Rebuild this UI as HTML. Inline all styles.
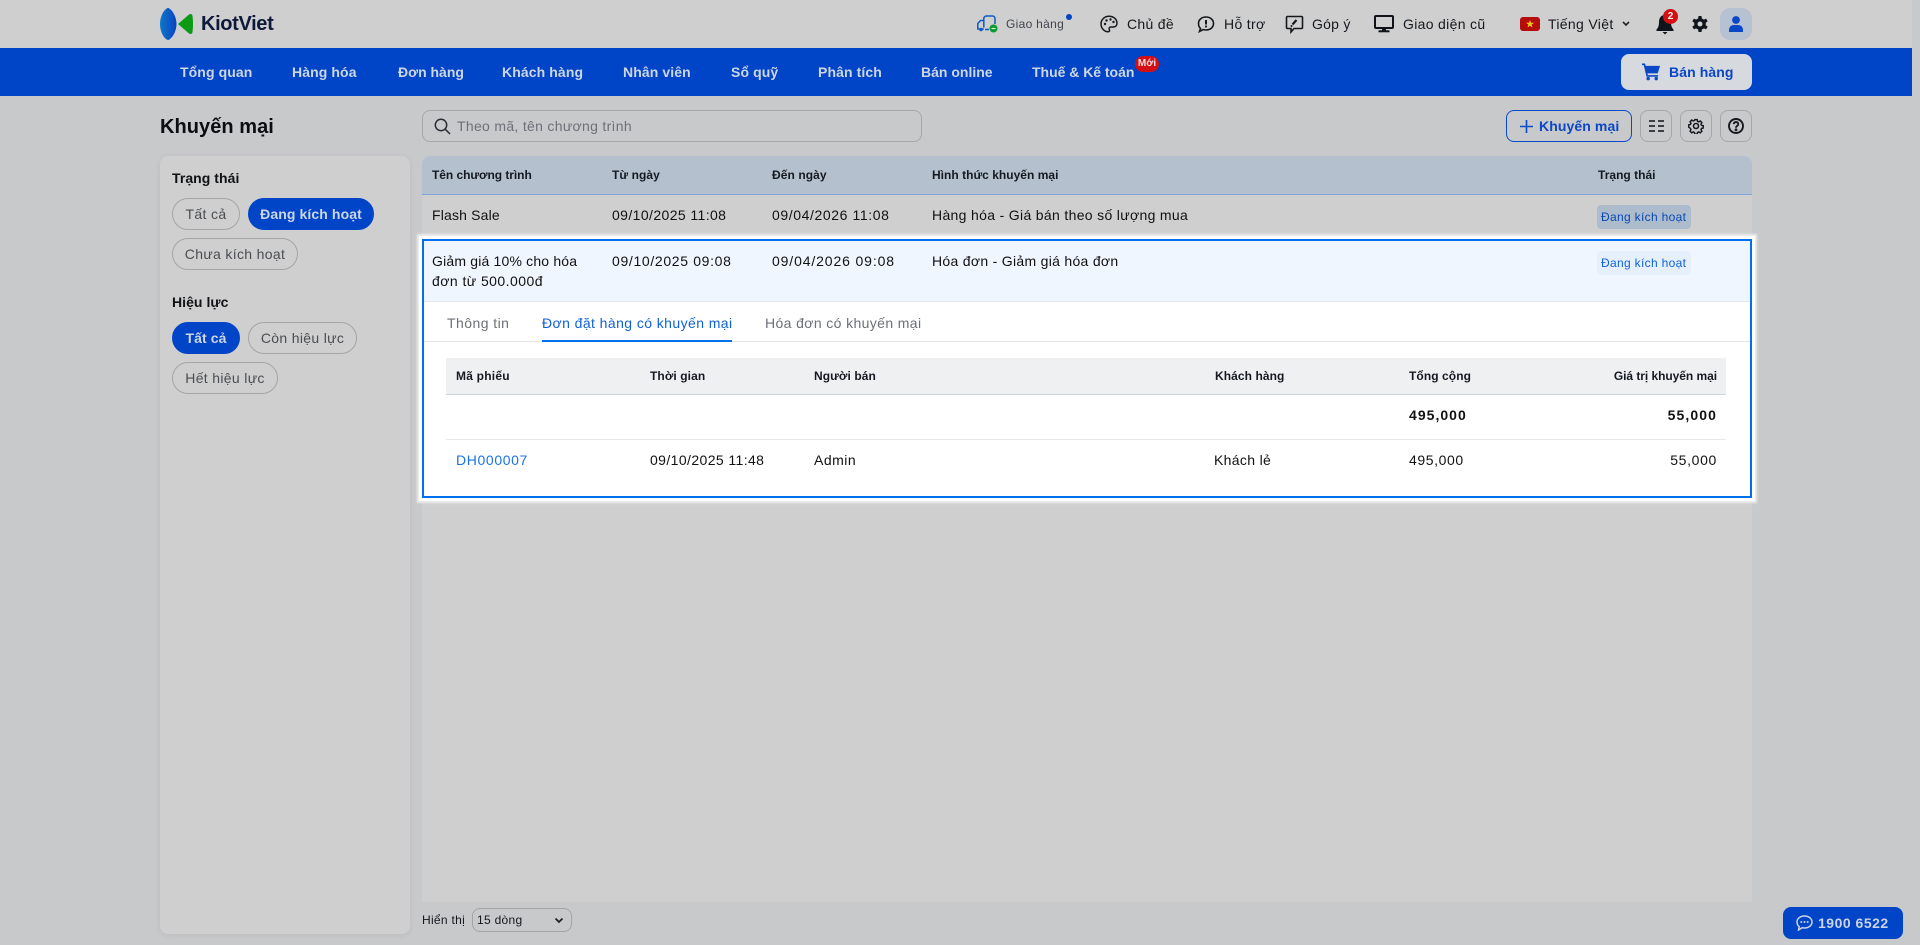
<!DOCTYPE html>
<html lang="vi"><head><meta charset="utf-8"><title>Khuyến mại</title>
<style>
*{box-sizing:border-box;margin:0;padding:0}
html,body{width:1920px;height:945px;overflow:hidden;background:#c8c9cb;font-family:"Liberation Sans",sans-serif;color:#111;font-size:14px}
.a{position:absolute}
.t{position:absolute;white-space:nowrap;line-height:20px;letter-spacing:.33px}
.b{font-weight:700}
.n{color:#ced6e4;font-weight:700;top:62px;letter-spacing:.1px}
.h{font-size:12px;font-weight:700;letter-spacing:.08px;color:#151a22}
.p{position:absolute;height:32px;border:1px solid #a4a5a7;border-radius:16px;line-height:30px;text-align:center;color:#4a4d52;letter-spacing:.33px;white-space:nowrap}
.p.on{background:#0044c8;border-color:#0044c8;color:#ced6e4;font-weight:700;letter-spacing:.1px}
.ib{position:absolute;top:110px;width:32px;height:32px;border:1px solid #a6a7a9;border-radius:8px}
svg{position:absolute;display:block}
</style></head><body>
<div class="a" style="left:0;top:0;width:1912px;height:48px;background:#cfcfcf"></div>
<div class="a" style="left:0;top:48px;width:1912px;height:48px;background:#0044c7"></div>

<!-- logo -->
<svg style="left:160px;top:8px" width="34" height="32" viewBox="0 0 34 32">
<defs><linearGradient id="g" x1="0" x2="1"><stop offset="0" stop-color="#0f78c4"/><stop offset="1" stop-color="#0a42c6"/></linearGradient></defs>
<path d="M7 .2C2.500 3 0 10 0 16s2.500 13 7 15.800C7.800 32 8.500 32 9 31.800 13.500 29 16.500 22 16.500 16S13.500 3 9 .2C8.500 0 7.800 0 7 .2z" fill="url(#g)"/>
<path d="M18 16L29 6.500Q32 5 32.500 8Q33.500 16 32.500 24Q32 27 29 25.500Z" fill="#0a9a16"/>
</svg>
<div class="t" style="left:201px;top:14px;font-size:20px;font-weight:700;color:#0e1a3a;letter-spacing:-.35px">KiotViet</div>

<!-- top right -->
<svg style="left:977px;top:15px" width="21" height="18" viewBox="0 0 21 18" fill="none">
<path d="M6.800 12.500V3.500a2.500 2.500 0 0 1 2.500-2.500h6.200a2.500 2.500 0 0 1 2.500 2.500V9" stroke="#0d5ac8" stroke-width="1.500"/><path d="M6.800 5.500H3.500L.8 8.500v5.500h6" stroke="#0d5ac8" stroke-width="1.500" fill="none"/><circle cx="4" cy="14.500" r="1.800" fill="#0d5ac8"/><path d="M8 14.500h4" stroke="#0d5ac8" stroke-width="1.500"/><circle cx="16.500" cy="13.500" r="4" fill="#0c9a2e"/><path d="M14.500 13.500h4" stroke="#d0f0d0" stroke-width="1.200"/></svg>
<div class="t" style="left:1006px;top:14px;font-size:12px;color:#40454c;letter-spacing:.3px">Giao hàng</div>
<div class="a" style="left:1066px;top:14px;width:6px;height:6px;border-radius:50%;background:#0044c8"></div>

<svg style="left:1100px;top:15px" width="18" height="18" viewBox="0 0 18 18" fill="none">
<path d="M9 1.200C4.500 1.200 1 4.700 1 9s3.500 7.800 7 7.800c1.600 0 1.800-1.200 1.300-2.200-.6-1.200 0-2.600 1.600-2.600h2.400c2 0 3.700-1.200 3.700-3.700C17 4 13.500 1.200 9 1.200z" stroke="#15181d" stroke-width="1.500"/><circle cx="5" cy="9" r="1.200" fill="#15181d"/><circle cx="6.500" cy="5.500" r="1.200" fill="#15181d"/><circle cx="10.500" cy="4.500" r="1.200" fill="#15181d"/><circle cx="13.500" cy="7" r="1.200" fill="#15181d"/></svg>
<div class="t" style="left:1127px;top:14px;letter-spacing:.3px;color:#15181d">Chủ đề</div>

<svg style="left:1197px;top:15px" width="18" height="18" viewBox="0 0 18 18" fill="none">
<path d="M9 2c4.400 0 7.500 2.800 7.500 6.500S13.400 15 9 15c-1 0-2-.2-2.800-.5L2.500 16.500l1-3C2.200 12.300 1.500 10.500 1.500 8.500 1.500 4.800 4.600 2 9 2z" stroke="#15181d" stroke-width="1.600"/><path d="M9 5v4.500" stroke="#15181d" stroke-width="2"/><circle cx="9" cy="11.500" r="1.100" fill="#15181d"/></svg>
<div class="t" style="left:1224px;top:14px;letter-spacing:.33px;color:#15181d">Hỗ trợ</div>

<svg style="left:1285px;top:15px" width="19" height="19" viewBox="0 0 19 19" fill="none">
<path d="M2.500 1.500h14a1 1 0 0 1 1 1v10a1 1 0 0 1-1 1H9l-3 3.500v-3.500H2.500a1 1 0 0 1-1-1v-10a1 1 0 0 1 1-1z" stroke="#15181d" stroke-width="1.600"/><path d="M7.500 9.500l4-4.500" stroke="#15181d" stroke-width="2.200"/><circle cx="6.500" cy="11" r="1" fill="#15181d"/></svg>
<div class="t" style="left:1312px;top:14px;letter-spacing:.25px;color:#15181d">Góp ý</div>

<svg style="left:1374px;top:15px" width="20" height="18" viewBox="0 0 20 18">
<rect x="1" y="1" width="18" height="12" rx="1" fill="none" stroke="#0f1217" stroke-width="2"/><rect x="8" y="13" width="4" height="3" fill="#0f1217"/><rect x="4.500" y="15.300" width="11" height="2" fill="#0f1217"/></svg>
<div class="t" style="left:1403px;top:14px;letter-spacing:.32px;color:#15181d">Giao diện cũ</div>

<svg style="left:1520px;top:17px" width="20" height="14" viewBox="0 0 20 14">
<rect width="20" height="14" rx="3" fill="#b50c0c"/><path d="M10 3l1 2.800h3l-2.400 1.800.9 2.900L10 8.700l-2.500 1.800.9-2.900L6 5.800h3z" fill="#f0c818"/></svg>
<div class="t" style="left:1548px;top:14px;letter-spacing:.33px;color:#15181d">Tiếng Việt</div>
<svg style="left:1622px;top:21px" width="8" height="6" viewBox="0 0 8 6" fill="none"><path d="M1 1l3 3 3-3" stroke="#222" stroke-width="1.600"/></svg>

<svg style="left:1656px;top:13px" width="18" height="22" viewBox="0 0 18 22">
<path d="M9 2C5 2 3 5 3 9c0 4-1 6-2.500 7.500V18h17v-1.500C16 15 15 13 15 9c0-4-2-7-6-7z" fill="#10151c"/><path d="M6.500 19h5L9 21.500z" fill="#10151c"/></svg>
<div class="a" style="left:1663px;top:9px;width:15px;height:15px;border-radius:50%;background:#d40f14;color:#f2f2f2;font-size:10px;font-weight:700;line-height:15px;text-align:center">2</div>

<svg style="left:1692px;top:16px" width="16" height="16" viewBox="0 0 16 16">
<g fill="#10151c"><circle cx="8" cy="8" r="5.800"/><rect x="6.300" y="0" width="3.400" height="16" rx=".8"/><rect x="6.300" y="0" width="3.400" height="16" rx=".8" transform="rotate(60 8 8)"/><rect x="6.300" y="0" width="3.400" height="16" rx=".8" transform="rotate(120 8 8)"/></g><circle cx="8" cy="8" r="2.500" fill="#cfcfcf"/></svg>

<div class="a" style="left:1720px;top:8px;width:32px;height:32px;border-radius:10px;background:#b6c2d1"></div>
<svg style="left:1729px;top:16px" width="14" height="16" viewBox="0 0 14 16" fill="#0a47c6"><circle cx="7" cy="4" r="3.900"/><path d="M0 16v-2c0-3 2-5 5-5h4c3 0 5 2 5 5v2z"/></svg>

<!-- nav -->
<div class="t n" style="left:180px">Tổng quan</div>
<div class="t n" style="left:292px">Hàng hóa</div>
<div class="t n" style="left:398px;letter-spacing:0">Đơn hàng</div>
<div class="t n" style="left:502px">Khách hàng</div>
<div class="t n" style="left:623px">Nhân viên</div>
<div class="t n" style="left:731px">Sổ quỹ</div>
<div class="t n" style="left:818px">Phân tích</div>
<div class="t n" style="left:921px;letter-spacing:0">Bán online</div>
<div class="t n" style="left:1032px;letter-spacing:-.02px">Thuế &amp; Kế toán</div>
<div class="a" style="left:1135px;top:56px;width:24px;height:16px;border-radius:8px;background:#d40f14;color:#f0e0e0;font-size:10px;font-weight:700;line-height:15px;text-align:center">Mới</div>

<div class="a" style="left:1621px;top:54px;width:131px;height:36px;border-radius:8px;background:#d6d9de"></div>
<svg style="left:1642px;top:63px" width="18" height="18" viewBox="0 0 19 18" fill="#0a47c6"><path d="M0 0h3.200l.7 2.500H19l-2.400 8H5.800l.4 1.800H17v1.700H4.800L1.800 1.700H0z"/><circle cx="6.500" cy="16" r="1.800"/><circle cx="15" cy="16" r="1.800"/></svg>
<div class="t" style="left:1669px;top:62px;font-weight:700;color:#0a47c6;letter-spacing:.1px">Bán hàng</div>

<!-- title + search -->
<div class="t" style="left:160px;top:116px;font-size:20px;font-weight:700;line-height:22px;color:#0b0d10;letter-spacing:.05px">Khuyến mại</div>
<div class="a" style="left:422px;top:110px;width:500px;height:32px;border:1px solid #a6a7a9;border-radius:8px"></div>
<svg style="left:434px;top:118px" width="17" height="17" viewBox="0 0 17 17" fill="none" stroke="#2a2d33" stroke-width="1.500"><circle cx="7" cy="7" r="5.700"/><path d="M11.300 11.300L16 16"/></svg>
<div class="t" style="left:457px;top:116px;color:#6c7077;letter-spacing:.31px">Theo mã, tên chương trình</div>

<div class="a" style="left:1506px;top:110px;width:126px;height:32px;border:1.500px solid #0a4ac8;border-radius:8px"></div>
<svg style="left:1520px;top:120px" width="13" height="13" viewBox="0 0 13 13" stroke="#0a4ac8" stroke-width="1.600"><path d="M6.500 0v13M0 6.500h13"/></svg>
<div class="t" style="left:1539px;top:116px;font-weight:700;color:#0a47c6;letter-spacing:.1px">Khuyến mại</div>
<div class="ib" style="left:1640px"></div>
<svg style="left:1649px;top:120px" width="15" height="13" viewBox="0 0 15 13" fill="#3b3f46"><rect y="0" width="6" height="2"/><rect x="9" y="0" width="6" height="2"/><rect y="5" width="6" height="2"/><rect x="9" y="5" width="6" height="2"/><rect y="10" width="6" height="2"/><rect x="9" y="10" width="6" height="2"/></svg>
<div class="ib" style="left:1680px"></div>
<svg style="left:1688px;top:118px" width="16" height="16" viewBox="0 0 16 16" fill="none" stroke="#16191e" stroke-width="1.600"><path d="M6.700 1h2.600l.4 1.900 1.300.6 1.700-1 1.800 1.800-1 1.700.6 1.300 1.900.4v2.600l-1.900.4-.6 1.300 1 1.700-1.800 1.800-1.700-1-1.300.6-.4 1.900H6.700l-.4-1.900-1.300-.6-1.700 1-1.800-1.800 1-1.700-.6-1.300L0 9.300V6.700l1.900-.4.600-1.300-1-1.700 1.800-1.800 1.700 1 1.300-.6z" transform="translate(.7 .7) scale(.91)"/><circle cx="8" cy="8" r="2.500"/></svg>
<div class="ib" style="left:1720px"></div>
<svg style="left:1728px;top:118px" width="16" height="16" viewBox="0 0 16 16" fill="none" stroke="#16191e" stroke-width="1.900"><circle cx="8" cy="8" r="7"/><path d="M5.700 6.200C5.800 4.800 6.800 4 8 4c1.300 0 2.300.9 2.300 2.100 0 1.800-2.300 1.800-2.300 3.600"/><circle cx="8" cy="11.800" r=".5" fill="#16191e"/></svg>

<!-- sidebar -->
<div class="a" style="left:160px;top:156px;width:250px;height:778px;border-radius:8px;background:#cfcfcf;box-shadow:0 1px 6px rgba(0,0,0,.07)"></div>
<div class="t b" style="left:172px;top:168px;letter-spacing:.05px;color:#101216">Trạng thái</div>
<div class="p" style="left:172px;top:198px;width:68px">Tất cả</div>
<div class="p on" style="left:248px;top:198px;width:126px">Đang kích hoạt</div>
<div class="p" style="left:172px;top:238px;width:126px">Chưa kích hoạt</div>
<div class="t b" style="left:172px;top:292px;letter-spacing:.05px;color:#101216">Hiệu lực</div>
<div class="p on" style="left:172px;top:322px;width:68px">Tất cả</div>
<div class="p" style="left:248px;top:322px;width:109px">Còn hiệu lực</div>
<div class="p" style="left:172px;top:362px;width:106px">Hết hiệu lực</div>

<!-- table -->
<div class="a" style="left:422px;top:156px;width:1330px;height:746px;background:#cfcfcf;border-radius:8px 8px 0 0"></div>
<div class="a" style="left:422px;top:156px;width:1330px;height:39px;background:#b4c0cd;border-bottom:1px solid #7fa6d6;border-radius:8px 8px 0 0"></div>
<div class="t h" style="left:432px;top:165px;letter-spacing:-.05px">Tên chương trình</div>
<div class="t h" style="left:612px;top:165px">Từ ngày</div>
<div class="t h" style="left:772px;top:165px">Đến ngày</div>
<div class="t h" style="left:932px;top:165px;letter-spacing:.02px">Hình thức khuyến mại</div>
<div class="t h" style="left:1598px;top:165px;letter-spacing:.02px">Trạng thái</div>

<div class="t" style="left:432px;top:205px;letter-spacing:.17px">Flash Sale</div>
<div class="t" style="left:612px;top:205px;letter-spacing:.4px">09/10/2025 11:08</div>
<div class="t" style="left:772px;top:205px;letter-spacing:.6px">09/04/2026 11:08</div>
<div class="t" style="left:932px;top:205px">Hàng hóa - Giá bán theo số lượng mua</div>
<div class="a" style="left:1597px;top:205px;width:94px;height:24px;border-radius:4px;background:#adbccc"></div>
<div class="t" style="left:1601px;top:207px;font-size:12px;color:#0a47b5;letter-spacing:.33px">Đang kích hoạt</div>

<!-- selected -->
<div class="a" style="left:422px;top:239px;width:1330px;height:259px;background:#fff;border:2px solid #0070ee;box-shadow:0 0 0 3px #fff,0 0 2px 5px rgba(245,245,245,.8)"></div>
<div class="a" style="left:424px;top:241px;width:1326px;height:61px;background:#f0f6ff;border-bottom:1px solid #e3e6ea"></div>
<div class="t" style="left:432px;top:251px;letter-spacing:.18px">Giảm giá 10% cho hóa</div>
<div class="t" style="left:432px;top:271px;letter-spacing:.45px">đơn từ 500.000đ</div>
<div class="t" style="left:612px;top:251px;letter-spacing:.66px">09/10/2025 09:08</div>
<div class="t" style="left:772px;top:251px;letter-spacing:.87px">09/04/2026 09:08</div>
<div class="t" style="left:932px;top:251px;letter-spacing:.3px">Hóa đơn - Giảm giá hóa đơn</div>
<div class="a" style="left:1597px;top:251px;width:94px;height:24px;border-radius:4px;background:#e6f0fc"></div>
<div class="t" style="left:1601px;top:253px;font-size:12px;color:#0f62d8;letter-spacing:.33px">Đang kích hoạt</div>

<div class="a" style="left:424px;top:341px;width:1326px;height:1px;background:#e2e4e8"></div>
<div class="t" style="left:447px;top:313px;color:#6c7077;letter-spacing:.45px">Thông tin</div>
<div class="t" style="left:542px;top:313px;color:#0f62d8;letter-spacing:.42px">Đơn đặt hàng có khuyến mại</div>
<div class="a" style="left:542px;top:340px;width:190px;height:2px;background:#0070ee"></div>
<div class="t" style="left:765px;top:313px;color:#6c7077;letter-spacing:.38px">Hóa đơn có khuyến mại</div>

<div class="a" style="left:446px;top:358px;width:1280px;height:37px;background:#eff0f2;border-bottom:1px solid #d0d3d8"></div>
<div class="t h" style="left:456px;top:366px;letter-spacing:.22px">Mã phiếu</div>
<div class="t h" style="left:650px;top:366px">Thời gian</div>
<div class="t h" style="left:814px;top:366px">Người bán</div>
<div class="t h" style="left:1215px;top:366px">Khách hàng</div>
<div class="t h" style="left:1409px;top:366px">Tổng cộng</div>
<div class="t h" style="right:203px;top:366px;letter-spacing:-.05px">Giá trị khuyến mại</div>

<div class="t b" style="left:1409px;top:405px;letter-spacing:1.03px">495,000</div>
<div class="t b" style="right:203px;top:405px;letter-spacing:1.1px">55,000</div>
<div class="a" style="left:446px;top:439px;width:1280px;height:1px;background:#e8e9eb"></div>
<div class="t" style="left:456px;top:450px;color:#1a73e8;letter-spacing:.63px">DH000007</div>
<div class="t" style="left:650px;top:450px;letter-spacing:.4px">09/10/2025 11:48</div>
<div class="t" style="left:814px;top:450px;letter-spacing:.5px">Admin</div>
<div class="t" style="left:1214px;top:450px">Khách lẻ</div>
<div class="t" style="left:1409px;top:450px;letter-spacing:.6px">495,000</div>
<div class="t" style="right:203px;top:450px;letter-spacing:.66px">55,000</div>

<!-- footer -->
<div class="t" style="left:422px;top:910px;font-size:12px;letter-spacing:.3px;color:#14171c">Hiển thị</div>
<div class="a" style="left:472px;top:908px;width:100px;height:24px;border:1px solid #a4a5a7;border-radius:8px"></div>
<div class="t" style="left:477px;top:910px;font-size:12px;letter-spacing:.3px;color:#14171c">15 dòng</div>
<svg style="left:554px;top:917px" width="10" height="7" viewBox="0 0 10 7" fill="none"><path d="M1.500 1.500L5 5l3.500-3.500" stroke="#222" stroke-width="1.800"/></svg>

<div class="a" style="left:1783px;top:907px;width:120px;height:32px;border-radius:8px;background:#0044c8"></div>
<svg style="left:1796px;top:915px" width="17" height="16" viewBox="0 0 17 16" fill="none"><path d="M8.500 1C12.700 1 16 3.500 16 7s-3.300 6-7.500 6c-.8 0-1.600-.1-2.300-.3L2.500 15l.7-3.300C1.800 10.600 1 9 1 7c0-3.500 3.300-6 7.500-6z" stroke="#cbd5e6" stroke-width="1.500"/><circle cx="5.300" cy="7" r="1" fill="#cbd5e6"/><circle cx="8.500" cy="7" r="1" fill="#cbd5e6"/><circle cx="11.700" cy="7" r="1" fill="#cbd5e6"/></svg>
<div class="t" style="left:1818px;top:913px;font-weight:700;color:#cbd5e6;letter-spacing:.5px">1900 6522</div>
</body></html>
